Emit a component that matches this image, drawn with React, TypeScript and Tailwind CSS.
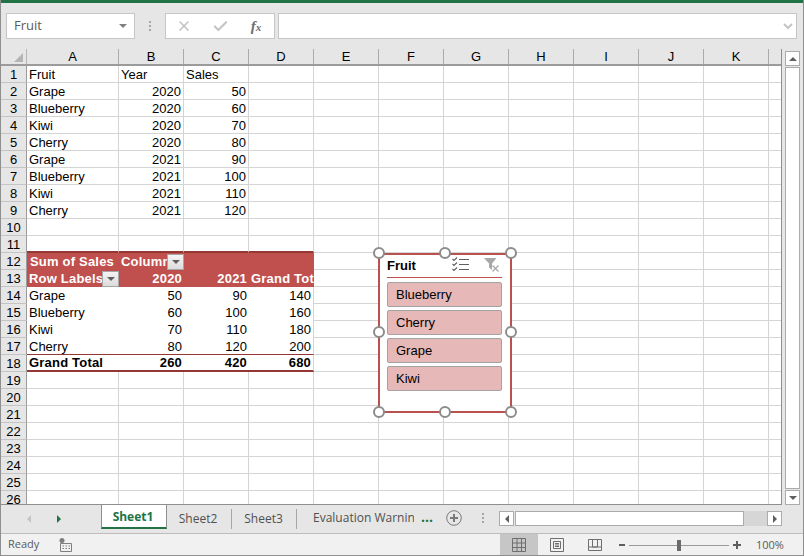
import { Check, X } from "lucide-react";
import type { ReactNode } from "react";

const COLUMNS = ["A", "B", "C", "D", "E", "F", "G", "H", "I", "J", "K"];

type CellDef = { text?: string; right?: boolean; btn?: boolean };

const PLAIN: Record<number, CellDef[]> = {
  1: [{ text: "Fruit" }, { text: "Year" }, { text: "Sales" }],
  2: [{ text: "Grape" }, { text: "2020", right: true }, { text: "50", right: true }],
  3: [{ text: "Blueberry" }, { text: "2020", right: true }, { text: "60", right: true }],
  4: [{ text: "Kiwi" }, { text: "2020", right: true }, { text: "70", right: true }],
  5: [{ text: "Cherry" }, { text: "2020", right: true }, { text: "80", right: true }],
  6: [{ text: "Grape" }, { text: "2021", right: true }, { text: "90", right: true }],
  7: [{ text: "Blueberry" }, { text: "2021", right: true }, { text: "100", right: true }],
  8: [{ text: "Kiwi" }, { text: "2021", right: true }, { text: "110", right: true }],
  9: [{ text: "Cherry" }, { text: "2021", right: true }, { text: "120", right: true }],
};

const PIVOT_BODY: Record<number, CellDef[]> = {
  14: [{ text: "Grape" }, { text: "50", right: true }, { text: "90", right: true }, { text: "140", right: true }],
  15: [{ text: "Blueberry" }, { text: "60", right: true }, { text: "100", right: true }, { text: "160", right: true }],
  16: [{ text: "Kiwi" }, { text: "70", right: true }, { text: "110", right: true }, { text: "180", right: true }],
  17: [{ text: "Cherry" }, { text: "80", right: true }, { text: "120", right: true }, { text: "200", right: true }],
};

const PIVOT_HEAD: Record<number, CellDef[]> = {
  12: [{ text: "Sum of Sales" }, { text: "Column", btn: true }, {}, {}],
  13: [{ text: "Row Labels", btn: true }, { text: "2020", right: true }, { text: "2021", right: true }, { text: "Grand Total" }],
};

const TOTAL: CellDef[] = [
  { text: "Grand Total" },
  { text: "260", right: true },
  { text: "420", right: true },
  { text: "680", right: true },
];

const FRUITS = ["Blueberry", "Cherry", "Grape", "Kiwi"];

const HANDLE_SPOTS = [
  "-left-[7px] -top-[8px]",
  "left-[59px] -top-[8px]",
  "-right-[7px] -top-[8px]",
  "-left-[7px] top-[71px]",
  "-right-[7px] top-[71px]",
  "-left-[7px] -bottom-[7px]",
  "left-[59px] -bottom-[7px]",
  "-right-[7px] -bottom-[7px]",
];

const OPEN_SANS = { fontFamily: "'Open Sans', sans-serif" };

function colWidth(i: number) {
  return i === 0 ? "w-[92px]" : "w-[65px]";
}

function FilterButton() {
  return (
    <span className="flex h-[16px] w-[17px] shrink-0 items-center justify-center border border-[#a6a6a6] bg-gradient-to-b from-[#f4f4f4] to-[#dcdcdc]">
      <span className="h-0 w-0 border-x-[4px] border-t-[4px] border-x-transparent border-t-[#5f5f5f]" />
    </span>
  );
}

function RowHeader({ n }: { n: number }) {
  return (
    <div className="flex h-full w-[26px] shrink-0 items-center justify-center border-r border-b border-r-[#9b9b9b] border-b-[#c4c4c4] bg-[#e6e6e6] pt-px text-[13px] text-black">
      {n}
    </div>
  );
}

function Row({ n, children }: { n: number; children: ReactNode }) {
  return (
    <div className="flex h-[17px] shrink-0">
      <RowHeader n={n} />
      {children}
      <div className="h-full w-[13px] shrink-0 border-b border-[#d4d4d4]" />
    </div>
  );
}

function EmptyCell({ i }: { i: number }) {
  return <div className={`${colWidth(i)} h-full shrink-0 border-r border-b border-[#d4d4d4]`} />;
}

function PlainRow({ n }: { n: number }) {
  const cells = PLAIN[n] ?? [];
  // row 11 carries the dark rule on top of the pivot header
  return (
    <Row n={n}>
      {COLUMNS.map((c, i) => (
        <div
          key={c}
          className={`${colWidth(i)} flex h-full shrink-0 items-center overflow-hidden border-r border-[#d4d4d4] px-[2px] pt-px text-[13px] text-black ${n === 11 && i < 4 ? "border-b-2 border-b-[#953735]" : "border-b"} ${cells[i]?.right ? "justify-end" : ""}`}
        >
          {cells[i]?.text}
        </div>
      ))}
    </Row>
  );
}

function PivotHeadRow({ n }: { n: number }) {
  const cells = PIVOT_HEAD[n];
  return (
    <Row n={n}>
      {COLUMNS.map((c, i) => {
        const cell = cells[i];
        if (i > 3) return <EmptyCell key={c} i={i} />;
        return (
          <div
            key={c}
            className={`${colWidth(i)} flex h-full shrink-0 items-center overflow-hidden whitespace-nowrap bg-[#c0504d] text-[13px] font-bold tracking-[0.2px] text-white ${n === 12 && i === 0 ? "pl-[3px]" : "pl-[2px]"} ${cell.right ? "justify-end pr-[2px]" : ""}`}
          >
            <span className={cell.btn ? "min-w-0 flex-1 overflow-hidden" : ""}>{cell.text}</span>
            {cell.btn && <FilterButton />}
          </div>
        );
      })}
    </Row>
  );
}

function PivotBodyRow({ n }: { n: number }) {
  const cells = PIVOT_BODY[n];
  return (
    <Row n={n}>
      {COLUMNS.map((c, i) =>
        i > 3 ? (
          <EmptyCell key={c} i={i} />
        ) : (
          <div
            key={c}
            className={`${colWidth(i)} flex h-full shrink-0 items-center overflow-hidden px-[2px] pt-px text-[13px] text-black ${i === 3 ? "border-r border-[#d4d4d4]" : ""} ${n === 17 ? "border-b border-b-[#953735]" : ""} ${cells[i].right ? "justify-end" : ""}`}
          >
            {cells[i].text}
          </div>
        ),
      )}
    </Row>
  );
}

function TotalRow() {
  return (
    <Row n={18}>
      {COLUMNS.map((c, i) =>
        i > 3 ? (
          <EmptyCell key={c} i={i} />
        ) : (
          <div
            key={c}
            className={`${colWidth(i)} flex h-full shrink-0 items-center overflow-hidden border-b-2 border-b-[#953735] px-[2px] text-[13px] font-bold tracking-[0.2px] text-black ${i === 3 ? "border-r border-r-[#d4d4d4]" : ""} ${TOTAL[i].right ? "justify-end" : ""}`}
          >
            {TOTAL[i].text}
          </div>
        ),
      )}
    </Row>
  );
}

function SheetRow({ n }: { n: number }) {
  if (n === 12 || n === 13) return <PivotHeadRow n={n} />;
  if (n >= 14 && n <= 17) return <PivotBodyRow n={n} />;
  if (n === 18) return <TotalRow />;
  return <PlainRow n={n} />;
}

function Slicer() {
  return (
    <div className="absolute left-[377px] top-[204px] flex h-[160px] w-[134px] flex-col border-2 border-[#b9514f] bg-white pl-[7px] pr-[8px]">
      <div className="flex h-[23px] shrink-0 items-center justify-between border-b border-[#c0504d] text-[13px] font-bold text-black">
        <span>Fruit</span>
        <span className="-mt-[3px] flex items-center gap-[15px] pr-[2px]">
          <svg width="17" height="15" viewBox="0 0 17 15" fill="none" stroke="#5f5f5f" strokeWidth="1.1">
            <path d="M0.5 2l1.500 1.500L5 0.500M0.500 7l1.500 1.500L5 5.500M0.500 12l1.500 1.500L5 10.500" />
            <path d="M7 2.500h10M7 7.500h10M7 12.500h10" />
          </svg>
          <svg width="16" height="16" viewBox="0 0 16 16" fill="none">
            <path d="M0 1h12.500L8 6.500V13L5 10.500V6.500z" fill="#a8a8a8" />
            <path d="M8.500 8.500l6 6M14.500 8.500l-6 6" stroke="#a8a8a8" strokeWidth="1.300" />
          </svg>
        </span>
      </div>
      <div className="mt-[4px] flex flex-col gap-[3px]">
        {FRUITS.map((f) => (
          <div
            key={f}
            className="flex h-[25px] items-center rounded-[2px] border border-[#a3a3a3] bg-[#e6b8b7] pl-[8px] text-[13px] text-black"
          >
            {f}
          </div>
        ))}
      </div>
      {HANDLE_SPOTS.map((spot) => (
        <span
          key={spot}
          className={`absolute h-[12px] w-[12px] rounded-full border-2 border-[#8c8c8c] bg-white ${spot}`}
        />
      ))}
    </div>
  );
}

function Triangle({ dir }: { dir: "up" | "down" | "left" | "right" }) {
  if (dir === "up") return <span className="h-0 w-0 border-x-[4px] border-b-[4px] border-x-transparent border-b-[#606060]" />;
  if (dir === "down") return <span className="h-0 w-0 border-x-[4px] border-t-[4px] border-x-transparent border-t-[#606060]" />;
  if (dir === "left") return <span className="h-0 w-0 border-y-[4px] border-r-[4px] border-y-transparent border-r-[#606060]" />;
  return <span className="h-0 w-0 border-y-[4px] border-l-[4px] border-y-transparent border-l-[#606060]" />;
}

function Dots() {
  return (
    <>
      <span className="h-[2px] w-[2px] bg-[#a6a6a6]" />
      <span className="h-[2px] w-[2px] bg-[#a6a6a6]" />
      <span className="h-[2px] w-[2px] bg-[#a6a6a6]" />
    </>
  );
}

function FormulaBar() {
  return (
    <div className="flex h-[46px] shrink-0 items-start bg-[#e6e6e6] pt-[10px] pl-[5px] pr-[6px]">
      <div className="flex h-[26px] w-[129px] items-center justify-between border border-[#c6c6c6] bg-white pl-[7px] pr-[7px] text-[13px] text-[#5c5c5c]">
        <span style={OPEN_SANS}>Fruit</span>
        <span className="h-0 w-0 border-x-[4px] border-t-[4px] border-x-transparent border-t-[#7f7f7f]" />
      </div>
      <div className="flex h-[26px] w-[30px] flex-col items-center justify-center gap-[2px]">
        <Dots />
      </div>
      <div className="flex h-[26px] w-[110px] items-center border border-[#c6c6c6] bg-white">
        <span className="flex w-[36px] justify-center"><X size={16} strokeWidth={2.500} color="#c4c4c4" /></span>
        <span className="flex w-[37px] justify-center"><Check size={17} strokeWidth={3} color="#c4c4c4" /></span>
        <span className="flex w-[34px] items-baseline justify-center text-[15px] font-bold italic text-[#6e6e6e]" style={{ fontFamily: "'Liberation Serif', serif" }}>
          f<span className="text-[11px]">x</span>
        </span>
      </div>
      <div className="ml-[3px] flex h-[26px] flex-1 items-center justify-end border border-[#c6c6c6] bg-white pr-[3px]">
        <svg width="10" height="7" viewBox="0 0 10 7" fill="none" stroke="#c4c4c4" strokeWidth="2">
          <path d="M1 1l4 4 4-4" />
        </svg>
      </div>
    </div>
  );
}

function Sheet() {
  return (
    <div className="flex h-[456px] shrink-0 bg-[#e6e6e6]">
      <div className="relative flex h-full w-[781px] shrink-0 flex-col overflow-hidden border-r border-b border-[#8f8f8f] bg-white">
        <div className="flex h-[17px] shrink-0 border-b-2 border-[#9b9b9b] bg-[#e6e6e6]">
          <div className="relative w-[26px] shrink-0 border-r border-[#b5b5b5]">
            <svg className="absolute right-[3px] bottom-[2px]" width="9" height="9" viewBox="0 0 9 9">
              <path d="M9 0v9H0z" fill="#b5b5b5" />
            </svg>
          </div>
          {COLUMNS.map((c, i) => (
            <div
              key={c}
              className={`${colWidth(i)} flex h-full shrink-0 items-center justify-center border-r border-[#ababab] text-[13px] text-black`}
            >
              {c}
            </div>
          ))}
        </div>
        {Array.from({ length: 26 }, (_, i) => (
          <SheetRow key={i} n={i + 1} />
        ))}
        <Slicer />
      </div>
      <div className="ml-[3px] flex w-[15px] shrink-0 flex-col pt-[2px]">
        <div className="flex h-[15px] shrink-0 items-center justify-center border border-[#ababab] bg-white"><Triangle dir="up" /></div>
        <div className="mt-[1px] flex-1 border border-[#ababab] bg-white" />
        <div className="mt-[1px] flex h-[15px] shrink-0 items-center justify-center border border-[#ababab] bg-white"><Triangle dir="down" /></div>
      </div>
    </div>
  );
}

function SheetTabs() {
  return (
    <div className="flex h-[29px] shrink-0 border-b border-[#bdbdbd] bg-[#e6e6e6] text-[12px]" style={OPEN_SANS}>
      <div className="flex w-[100px] shrink-0 items-center pb-[1px]">
        <span className="ml-[26px] h-0 w-0 border-y-[4px] border-r-[4px] border-y-transparent border-r-[#c4c4c4]" />
        <span className="ml-[26px] h-0 w-0 border-y-[4px] border-l-[4px] border-y-transparent border-l-[#217346]" />
      </div>
      <div className="flex h-[24px] w-[66px] shrink-0 items-center justify-center border-x border-b-2 border-x-[#8f8f8f] border-b-[#217346] bg-white pt-[2px] pr-[2px] font-bold text-[#217346]">
        Sheet1
      </div>
      <div className="flex h-[24px] w-[65px] shrink-0 items-end justify-center text-[#505050]">
        <span className="flex h-[20px] w-full items-center justify-center border-r border-[#a6a6a6] pr-[2px]">Sheet2</span>
      </div>
      <div className="flex h-[24px] w-[65px] shrink-0 items-end justify-center text-[#505050]">
        <span className="flex h-[20px] w-full items-center justify-center border-r border-[#a6a6a6] pr-[1px]">Sheet3</span>
      </div>
      <div className="flex h-[24px] w-[117px] shrink-0 items-center overflow-hidden whitespace-nowrap pl-[16px] pt-[2px] text-[#505050]">
        Evaluation Warning
      </div>
      <div className="flex h-[24px] w-[26px] shrink-0 items-center justify-center text-[14px] font-bold leading-none text-[#217346]">...</div>
      <div className="flex h-[26px] w-[29px] shrink-0 items-center justify-center pr-[2px]">
        <svg width="16" height="16" viewBox="0 0 16 16" fill="none" stroke="#7a7a7a">
          <circle cx="8" cy="8" r="7.300" />
          <path d="M8 4v8M4 8h8" strokeWidth="2" />
        </svg>
      </div>
      <div className="flex h-[26px] w-[30px] shrink-0 flex-col items-center justify-center gap-[2px] pr-[2px]">
        <Dots />
      </div>
      <div className="mt-[6px] flex h-[15px] w-[283px] shrink-0">
        <span className="flex w-[15px] items-center justify-center border border-[#ababab] bg-white"><Triangle dir="left" /></span>
        <span className="ml-[1px] w-[229px] border border-[#ababab] bg-white" />
        <span className="w-[23px] bg-[#d6d6d6]" />
        <span className="flex w-[15px] items-center justify-center border border-[#ababab] bg-white"><Triangle dir="right" /></span>
      </div>
    </div>
  );
}

function StatusBar() {
  return (
    <div className="flex h-[22px] shrink-0 items-center bg-[#f1f1f1] text-[11px] text-[#5a5a5a]" style={OPEN_SANS}>
      <span className="ml-[7px] w-[51px] pb-px">Ready</span>
      <svg width="14" height="14" viewBox="0 0 14 14" fill="none">
        <circle cx="3" cy="2.500" r="2.500" fill="#7f7f7f" />
        <path d="M1.500 5.500h11v8h-11z" stroke="#7f7f7f" />
        <path d="M3.500 8h1.500M6.500 8h1.500M9.500 8h1.500M3.500 10.500h1.500M6.500 10.500h1.500M9.500 10.500h1.500" stroke="#7f7f7f" />
      </svg>
      <div className="ml-[427px] flex h-full w-[38px] items-center justify-center bg-[#c6c6c6]">
        <svg width="14" height="14" viewBox="0 0 14 14" fill="none" stroke="#6f6f6f">
          <path d="M.5.5h13v13H.5zM5 .5v13M9.500 .5v13M.5 5h13M.5 9.500h13" />
        </svg>
      </div>
      <div className="flex w-[38px] justify-center">
        <svg width="14" height="14" viewBox="0 0 14 14" fill="none" stroke="#6f6f6f">
          <path d="M.5.5h13v13H.5zM3.500 3.500h7v7h-7zM5 5.500h4M5 7h4M5 8.500h4" />
        </svg>
      </div>
      <div className="flex w-[38px] justify-center">
        <svg width="14" height="12" viewBox="0 0 14 12" fill="none" stroke="#6f6f6f">
          <path d="M.5.5h13v11H.5zM.5 8h13M4.500 .5V8h5V.5" />
        </svg>
      </div>
      <span className="ml-[5px] h-[2px] w-[6px] bg-[#5f5f5f]" />
      <div className="relative ml-[4px] flex h-[12px] w-[100px] items-center">
        <span className="h-px w-full bg-[#9a9a9a]" />
        <span className="absolute left-[48px] h-[11px] w-[4px] bg-[#6a6a6a]" />
      </div>
      <svg className="ml-[4px]" width="8" height="8" viewBox="0 0 8 8" stroke="#5f5f5f" strokeWidth="2">
        <path d="M0 4h8M4 0v8" />
      </svg>
      <span className="ml-[15px]">100%</span>
    </div>
  );
}

export default function App() {
  return (
    <div
      className="flex h-[556px] w-[804px] flex-col overflow-hidden border-x border-b border-x-[#8f8f8f] border-b-[#8f8f8f] bg-[#e6e6e6]"
      style={{ fontFamily: "'Liberation Sans', Arial, sans-serif" }}
    >
      <div className="h-[3px] shrink-0 bg-[#217346]" />
      <FormulaBar />
      <Sheet />
      <SheetTabs />
      <StatusBar />
    </div>
  );
}
